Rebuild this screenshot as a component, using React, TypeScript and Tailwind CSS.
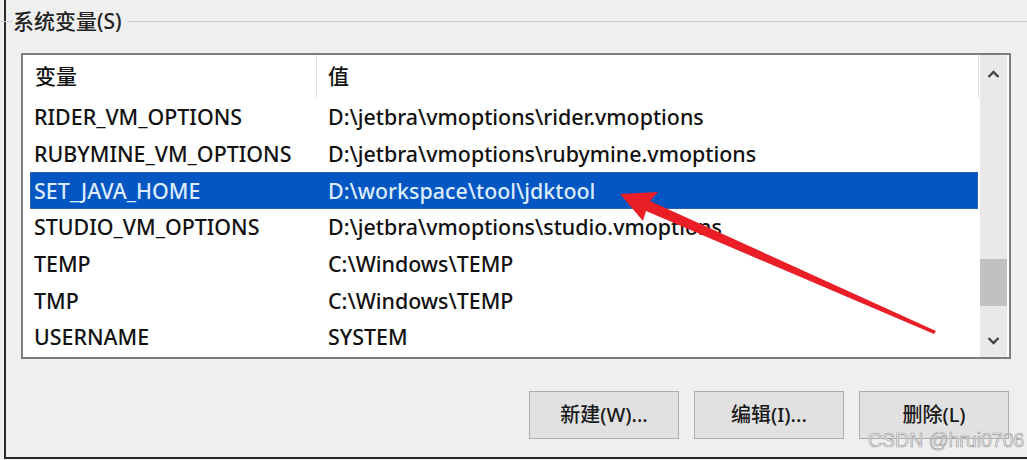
import React from 'react';

const rows = [
  { name: 'RIDER_VM_OPTIONS', value: 'D:\\jetbra\\vmoptions\\rider.vmoptions' },
  { name: 'RUBYMINE_VM_OPTIONS', value: 'D:\\jetbra\\vmoptions\\rubymine.vmoptions' },
  { name: 'SET_JAVA_HOME', value: 'D:\\workspace\\tool\\jdktool', selected: true },
  { name: 'STUDIO_VM_OPTIONS', value: 'D:\\jetbra\\vmoptions\\studio.vmoptions' },
  { name: 'TEMP', value: 'C:\\Windows\\TEMP' },
  { name: 'TMP', value: 'C:\\Windows\\TEMP' },
  { name: 'USERNAME', value: 'SYSTEM' },
];

const buttons = ['新建(W)...', '编辑(I)...', '删除(L)'];

function Chevron({ up }: { up?: boolean }) {
  return (
    <svg width="13" height="9" viewBox="0 0 13 9">
      <path
        d={up ? 'M1.5 7 L6.5 2 L11.5 7' : 'M1.5 2 L6.5 7 L11.5 2'}
        fill="none"
        stroke="#444"
        strokeWidth="2.4"
      />
    </svg>
  );
}

export default function App() {
  return (
    <div className="relative w-[1027px] h-[460px] overflow-hidden bg-[#efefef] pl-[4px] font-['Noto_Sans','Noto_Sans_CJK_SC',sans-serif] text-[#111]">
      <div className="h-[459px] border-l-2 border-b-2 border-[#2a2a2a] flex flex-col">
        {/* Group box title */}
        <div className="flex items-center h-[22px] mt-[10px] -ml-[6px]">
          <div className="w-[12px] h-px bg-[#cfcfcf]" />
          <span className="px-[1px] text-[21px] leading-none font-medium text-[#222]">系统变量(S)</span>
          <div className="flex-1 h-px bg-[#cfcfcf] ml-[4px]" />
        </div>

        {/* List view */}
        <div className="ml-[15px] mt-[21px] w-[990px] h-[306px] border-2 border-[#7d7d7d] bg-white flex">
          <div className="flex-1 flex flex-col">
            <div className="flex h-[44px] items-center text-[21px] font-medium">
              <div className="w-[294px] pl-[12px] h-full flex items-center border-r border-[#e4e4e4]">变量</div>
              <div className="flex-1 pl-[11px] h-full flex items-center border-r border-[#e4e4e4] mr-[1px]">值</div>
            </div>
            <div className="pl-[7px] pr-[2px]">
              {rows.map(r => (
                <div
                  key={r.name}
                  className={`flex items-center h-[36.67px] text-[21.4px] font-medium ${
                    r.selected ? 'bg-[#0456c2] text-[#dcecff] outline-1 outline-dotted outline-[#4b6f9c] -outline-offset-1' : ''
                  }`}
                >
                  <div className="w-[294px] pl-[4px] whitespace-nowrap">{r.name}</div>
                  <div className="pl-[4px] whitespace-nowrap">{r.value}</div>
                </div>
              ))}
            </div>
          </div>
          {/* Scrollbar */}
          <div className="w-[27px] mr-[2px] bg-[#e9e9e9] flex flex-col items-center">
            <div className="h-[36px] flex items-center justify-center pt-[2px]">
              <Chevron up />
            </div>
            <div className="flex-1 w-full flex flex-col pt-[168px]">
              <div className="h-[47px] w-full bg-[#c1c1c1]" />
            </div>
            <div className="h-[34px] flex items-center justify-center">
              <Chevron />
            </div>
          </div>
        </div>

        {/* Buttons */}
        <div className="flex justify-end gap-[15px] pr-[18px] mt-[32px]">
          {buttons.map(b => (
            <button
              key={b}
              className="w-[150px] h-[48px] border border-[#adadad] bg-[#e1e1e1] text-[20px] font-medium text-[#1a1a1a]"
            >
              {b}
            </button>
          ))}
        </div>
      </div>

      {/* Red arrow annotation */}
      <svg className="absolute left-0 top-0 pointer-events-none" width="1027" height="460">
        <polygon
          points="620,194 658,192 650,201 936,331 934,334 646,211 643,221"
          fill="#e91e27"
        />
      </svg>

      {/* Watermark */}
      <div className="absolute left-[868px] top-[431px] text-[19.5px] leading-none font-['Liberation_Sans',sans-serif] text-[#f6f6f6] [-webkit-text-stroke:0.7px_#9c9c9c] whitespace-nowrap">
        CSDN @hrui0706
      </div>
    </div>
  );
}
